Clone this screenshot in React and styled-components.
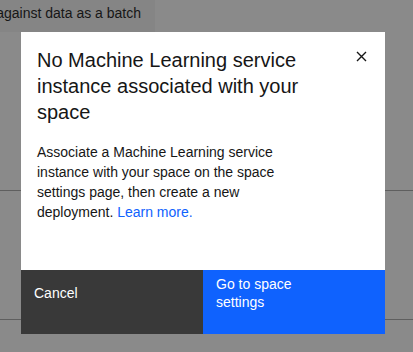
import React from 'react';
import styled, { createGlobalStyle } from 'styled-components';

const GlobalStyle = createGlobalStyle`
  html, body {
    margin: 0;
    padding: 0;
    background: #ffffff;
  }
  body {
    font-family: "Liberation Sans", Arial, sans-serif;
    color: #161616;
  }
`;

const Page = styled.div`
  position: relative;
  width: 413px;
  height: 352px;
  overflow: hidden;
  background: #ffffff;
`;

const BatchTile = styled.div`
  width: 155px;
  height: 32px;
  box-sizing: border-box;
  background: #f4f4f4;
  padding: 3px 14px 0 0;
  display: flex;
  justify-content: flex-end;
  font-size: 14px;
  line-height: 20px;
  white-space: nowrap;
  overflow: hidden;
`;

const Row = styled.div`
  height: ${({ h }) => h}px;
  border-bottom: 1px solid #a8a8a8;
`;

const Overlay = styled.div`
  position: absolute;
  inset: 0;
  background: rgba(22, 22, 22, 0.5);
  padding: 32px 0 0 21px;
  box-sizing: border-box;
`;

const Modal = styled.div`
  position: relative;
  width: 364px;
  height: 302px;
  background: #ffffff;
  display: flex;
  flex-direction: column;
`;

const Content = styled.div`
  flex: 1;
  padding: 15px 16px 0 16px;
`;

const Title = styled.h2`
  margin: 0 0 17px;
  width: 290px;
  font-size: 20px;
  line-height: 26px;
  font-weight: 400;
  color: #161616;
`;

const Body = styled.p`
  margin: 0;
  width: 262px;
  font-size: 14px;
  line-height: 20px;
  color: #161616;
`;

const Link = styled.a`
  color: #0f62fe;
  text-decoration: none;
`;

const CloseButton = styled.button`
  position: absolute;
  top: 14px;
  right: 14px;
  width: 20px;
  height: 20px;
  padding: 0;
  border: none;
  background: transparent;
  display: flex;
  align-items: center;
  justify-content: center;
`;

const Footer = styled.div`
  display: grid;
  grid-template-columns: 1fr 1fr;
  height: 64px;
`;

const FooterButton = styled.button`
  border: none;
  text-align: left;
  font-family: inherit;
  font-size: 14px;
  line-height: 18px;
  color: #ffffff;
  padding: ${({ primary }) => (primary ? '5px 60px 0 13px' : '14px 13px 0 13px')};
  display: flex;
  align-items: flex-start;
  background: ${({ primary }) => (primary ? '#0f62fe' : '#393939')};
`;

const App = () => {
  return (
    <Page>
      <GlobalStyle />
      <BatchTile>Run the model against data as a batch</BatchTile>
      <Row h={158} />
      <Row h={128} />

      <Overlay>
        <Modal>
          <CloseButton aria-label="Close">
            <svg width="11" height="11" viewBox="0 0 11 11">
              <path d="M1 1 L10 10 M10 1 L1 10" stroke="#161616" strokeWidth="1.4" />
            </svg>
          </CloseButton>
          <Content>
            <Title>No Machine Learning service instance associated with your space</Title>
            <Body>
              Associate a Machine Learning service instance with your space on the space
              settings page, then create a new deployment. <Link href="#">Learn more.</Link>
            </Body>
          </Content>
          <Footer>
            <FooterButton>Cancel</FooterButton>
            <FooterButton primary>Go to space settings</FooterButton>
          </Footer>
        </Modal>
      </Overlay>
    </Page>
  );
};

export default App;
